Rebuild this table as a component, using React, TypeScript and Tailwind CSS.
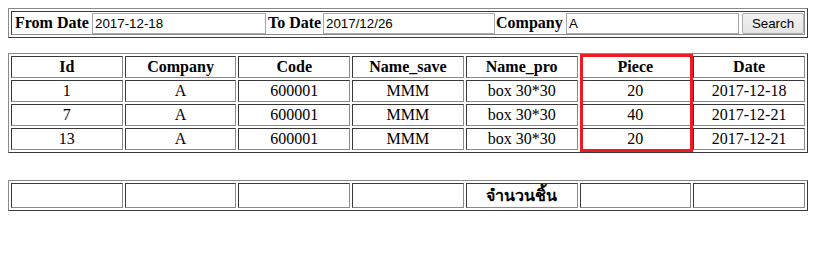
import React from "react";

const cols = ["Id", "Company", "Code", "Name_save", "Name_pro", "Piece", "Date"];

const rows = [
  ["1", "A", "600001", "MMM", "box 30*30", "20", "2017-12-18"],
  ["7", "A", "600001", "MMM", "box 30*30", "40", "2017-12-21"],
  ["13", "A", "600001", "MMM", "box 30*30", "20", "2017-12-21"],
];

const tableCls =
  "w-[800px] table-fixed border-separate border-spacing-[2px] border border-t-[#8a8a8a] border-l-[#8a8a8a] border-b-[#3a3a3a] border-r-[#3a3a3a]";
const cellCls =
  "border border-t-[#3a3a3a] border-l-[#3a3a3a] border-b-[#8a8a8a] border-r-[#8a8a8a] p-0 text-center align-middle";

const inputCls =
  "h-[21px] shrink-0 border border-[#a9a9a9] bg-white px-[2px] text-[13.33px] text-black outline-none font-['Liberation_Sans',Arial,sans-serif]";

const labelCls = "shrink-0 whitespace-nowrap leading-[18px]";

export default function App() {
  return (
    <div className="min-h-[277px] w-[819px] bg-white pl-[8px] pt-[8px] text-[16px] text-black font-['Liberation_Serif','Times_New_Roman',serif]">
      {/* search form */}
      <table className={tableCls}>
        <tbody>
          <tr>
            <td className={`${cellCls} h-[24px] text-left`}>
              <div className="flex items-center pl-[3px]">
                <b className={`${labelCls} w-[74px]`}>From Date</b>
                <input className={`${inputCls} ml-[3px] w-[174px]`} defaultValue="2017-12-18" />
                <b className={`${labelCls} ml-[2px] w-[53px]`}>To Date</b>
                <input className={`${inputCls} ml-[2px] w-[172px]`} defaultValue="2017/12/26" />
                <b className={`${labelCls} ml-[1px] w-[68px]`}>Company</b>
                <input className={`${inputCls} ml-[2px] w-[173px]`} defaultValue="A" />
                <button className="ml-[3px] h-[21px] w-[62px] shrink-0 rounded-[2px] border border-[#adadad] bg-gradient-to-b from-[#f2f2f2] to-[#e4e4e4] text-[13.33px] text-black font-['Liberation_Sans',Arial,sans-serif]">
                  Search
                </button>
              </div>
            </td>
          </tr>
        </tbody>
      </table>

      {/* results */}
      <div className="relative mt-[15px] w-[800px]">
        <table className={tableCls}>
          <thead>
            <tr>
              {cols.map((c) => (
                <th key={c} className={`${cellCls} h-[22px] font-bold leading-[18px]`}>
                  {c}
                </th>
              ))}
            </tr>
          </thead>
          <tbody>
            {rows.map((r, i) => (
              <tr key={i}>
                {r.map((v, j) => (
                  <td key={j} className={`${cellCls} h-[22px] leading-[18px]`}>
                    {v}
                  </td>
                ))}
              </tr>
            ))}
          </tbody>
        </table>
        <div className="pointer-events-none absolute left-[572px] top-[1px] h-[98px] w-[113px] border-[3px] border-[#ed1c24]" />
      </div>

      {/* totals */}
      <table className={`${tableCls} mt-[27px]`}>
        <tbody>
          <tr>
            {[0, 1, 2, 3, 4, 5, 6].map((k) => (
              <td key={k} className={`${cellCls} h-[25px] font-bold leading-[20px] font-['Tahoma','DejaVu_Sans',sans-serif]`}>
                {k === 4 ? "จำนวนชิ้น" : ""}
              </td>
            ))}
          </tr>
        </tbody>
      </table>
    </div>
  );
}
